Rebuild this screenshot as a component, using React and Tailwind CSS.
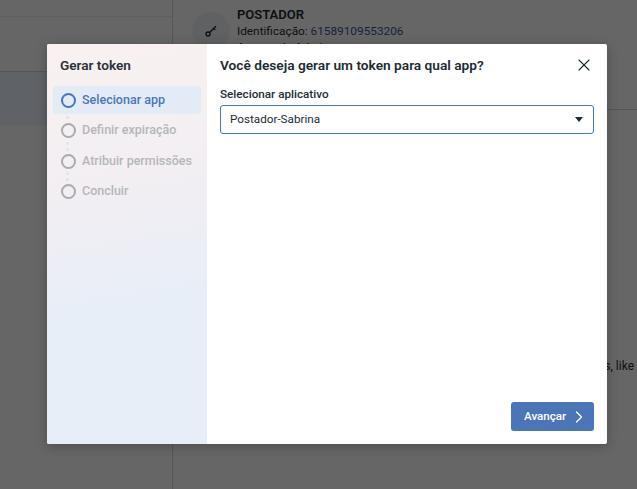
import { X, ChevronRight } from "lucide-react";

const steps = ["Selecionar app", "Definir expiração", "Atribuir permissões", "Concluir"];

function Stepper() {
  return (
    <div className="mt-[11px] flex flex-col gap-[2.5px]">
      {steps.map((step, i) => (
        <div key={step} className="relative">
          <div
            className={`flex h-[28px] items-center gap-[6.5px] whitespace-nowrap rounded-[4px] pl-[7.5px] text-[12.5px] font-medium ${
              i === 0 ? "bg-[#e2ebf6] text-[#4a76b8]" : "text-[#b5b6b9]"
            }`}
          >
            <span
              className={`h-[15px] w-[15px] shrink-0 rounded-full border-2 ${
                i === 0 ? "border-[#4a76b8]" : "border-[#a9abb0]"
              }`}
            />
            {step}
          </div>
          {/* little dots between the steps */}
          {i === 0 && <span className="absolute left-[13px] top-[30px] h-[3px] w-[3px] rounded-full bg-[#e2e2e8]" />}
          {(i === 1 || i === 2) && (
            <>
              <span className="absolute left-[13px] top-[25px] h-[3px] w-[3px] rounded-full bg-[#e2e2e8]" />
              <span className="absolute left-[13px] top-[31px] h-[3px] w-[3px] rounded-full bg-[#e2e2e8]" />
            </>
          )}
        </div>
      ))}
    </div>
  );
}

function KeyIcon() {
  return (
    <svg width="12" height="12" viewBox="0 0 12 12" fill="none" stroke="#1c2b33" strokeWidth="1.4" strokeLinecap="round">
      <circle cx="3" cy="9" r="2" />
      <path d="M4.6 7.4 10.6 1.4" />
      <path d="M8.6 3.4 10 4.6" strokeWidth="1.2" />
    </svg>
  );
}

export default function App() {
  return (
    <div className="relative h-[489px] w-[637px] overflow-hidden bg-white font-['Roboto',sans-serif] text-[#1c2b33]">
      {/* page behind the dialog */}
      <div className="flex h-full">
        <div className="w-[173px] shrink-0 border-r border-[#d4d6d9]">
          <div className="h-[17px] border-b border-[#eceef0]" />
          <div className="h-[55px] border-b border-[#d4d6d9]" />
          <div className="h-[53px] bg-[#eef6fe]" />
        </div>
        <div className="flex-1">
          <div className="h-[110px] border-b border-[#d4d6d9] pl-[19px] pt-[7px]">
            <div className="flex gap-[7px]">
              <div className="mt-[5px] flex h-[38px] w-[38px] items-center justify-center rounded-full bg-[#f0f2f5]">
                <KeyIcon />
              </div>
              <div className="text-[11.8px] leading-[16px]">
                <div className="text-[13px] font-semibold">POSTADOR</div>
                <div>
                  Identificação: <span className="text-[#385898]">61589109553206</span>
                </div>
                <div>Acesso de Admin</div>
              </div>
            </div>
          </div>
          <p className="mt-[248px] whitespace-nowrap pr-[3px] text-right text-[12px] leading-[16px]">s, like</p>
        </div>
      </div>

      {/* dialog overlay */}
      <div className="absolute inset-0 bg-black/60" />
      <div className="absolute left-[47px] top-[44px] flex h-[400px] w-[560px] overflow-hidden rounded-[2px] bg-white shadow-[0_2px_12px_rgba(0,0,0,0.25)]">
        <aside className="w-[160px] shrink-0 bg-[linear-gradient(170deg,#f9f1f0_0%,#f1eef3_40%,#e6eef8_68%)] px-[6px] pt-[11px]">
          <h2 className="pl-[7px] text-[13.6px] font-semibold leading-[20px] text-[#283139]">Gerar token</h2>
          <Stepper />
        </aside>
        <main className="flex flex-1 flex-col px-[13px] pb-[13px] pt-[11px]">
          <div className="flex items-center justify-between">
            <h1 className="text-[13.7px] font-semibold leading-[20px]">Você deseja gerar um token para qual app?</h1>
            <X size={20} strokeWidth={1.3} className="mr-[0.5px]" />
          </div>
          <label className="mt-[11px] text-[11.7px] font-medium leading-[16px]">Selecionar aplicativo</label>
          <div className="mt-[3px] flex h-[29px] items-center justify-between rounded-[3px] border-[1.5px] border-[#4a76b8] pl-[9px] pr-[10px] text-[11.7px]">
            <span>Postador-Sabrina</span>
            <span className="h-0 w-0 border-x-[4.5px] border-t-[5px] border-x-transparent border-t-[#1c2b33]" />
          </div>
          <div className="mt-auto flex justify-end">
            <button className="flex h-[29px] w-[83px] items-center justify-between rounded-[3px] bg-[#4a76b8] pl-[13px] pr-[5px] text-[11.6px] font-medium text-white">
              Avançar
              <ChevronRight size={20} strokeWidth={1.5} />
            </button>
          </div>
        </main>
      </div>
    </div>
  );
}
